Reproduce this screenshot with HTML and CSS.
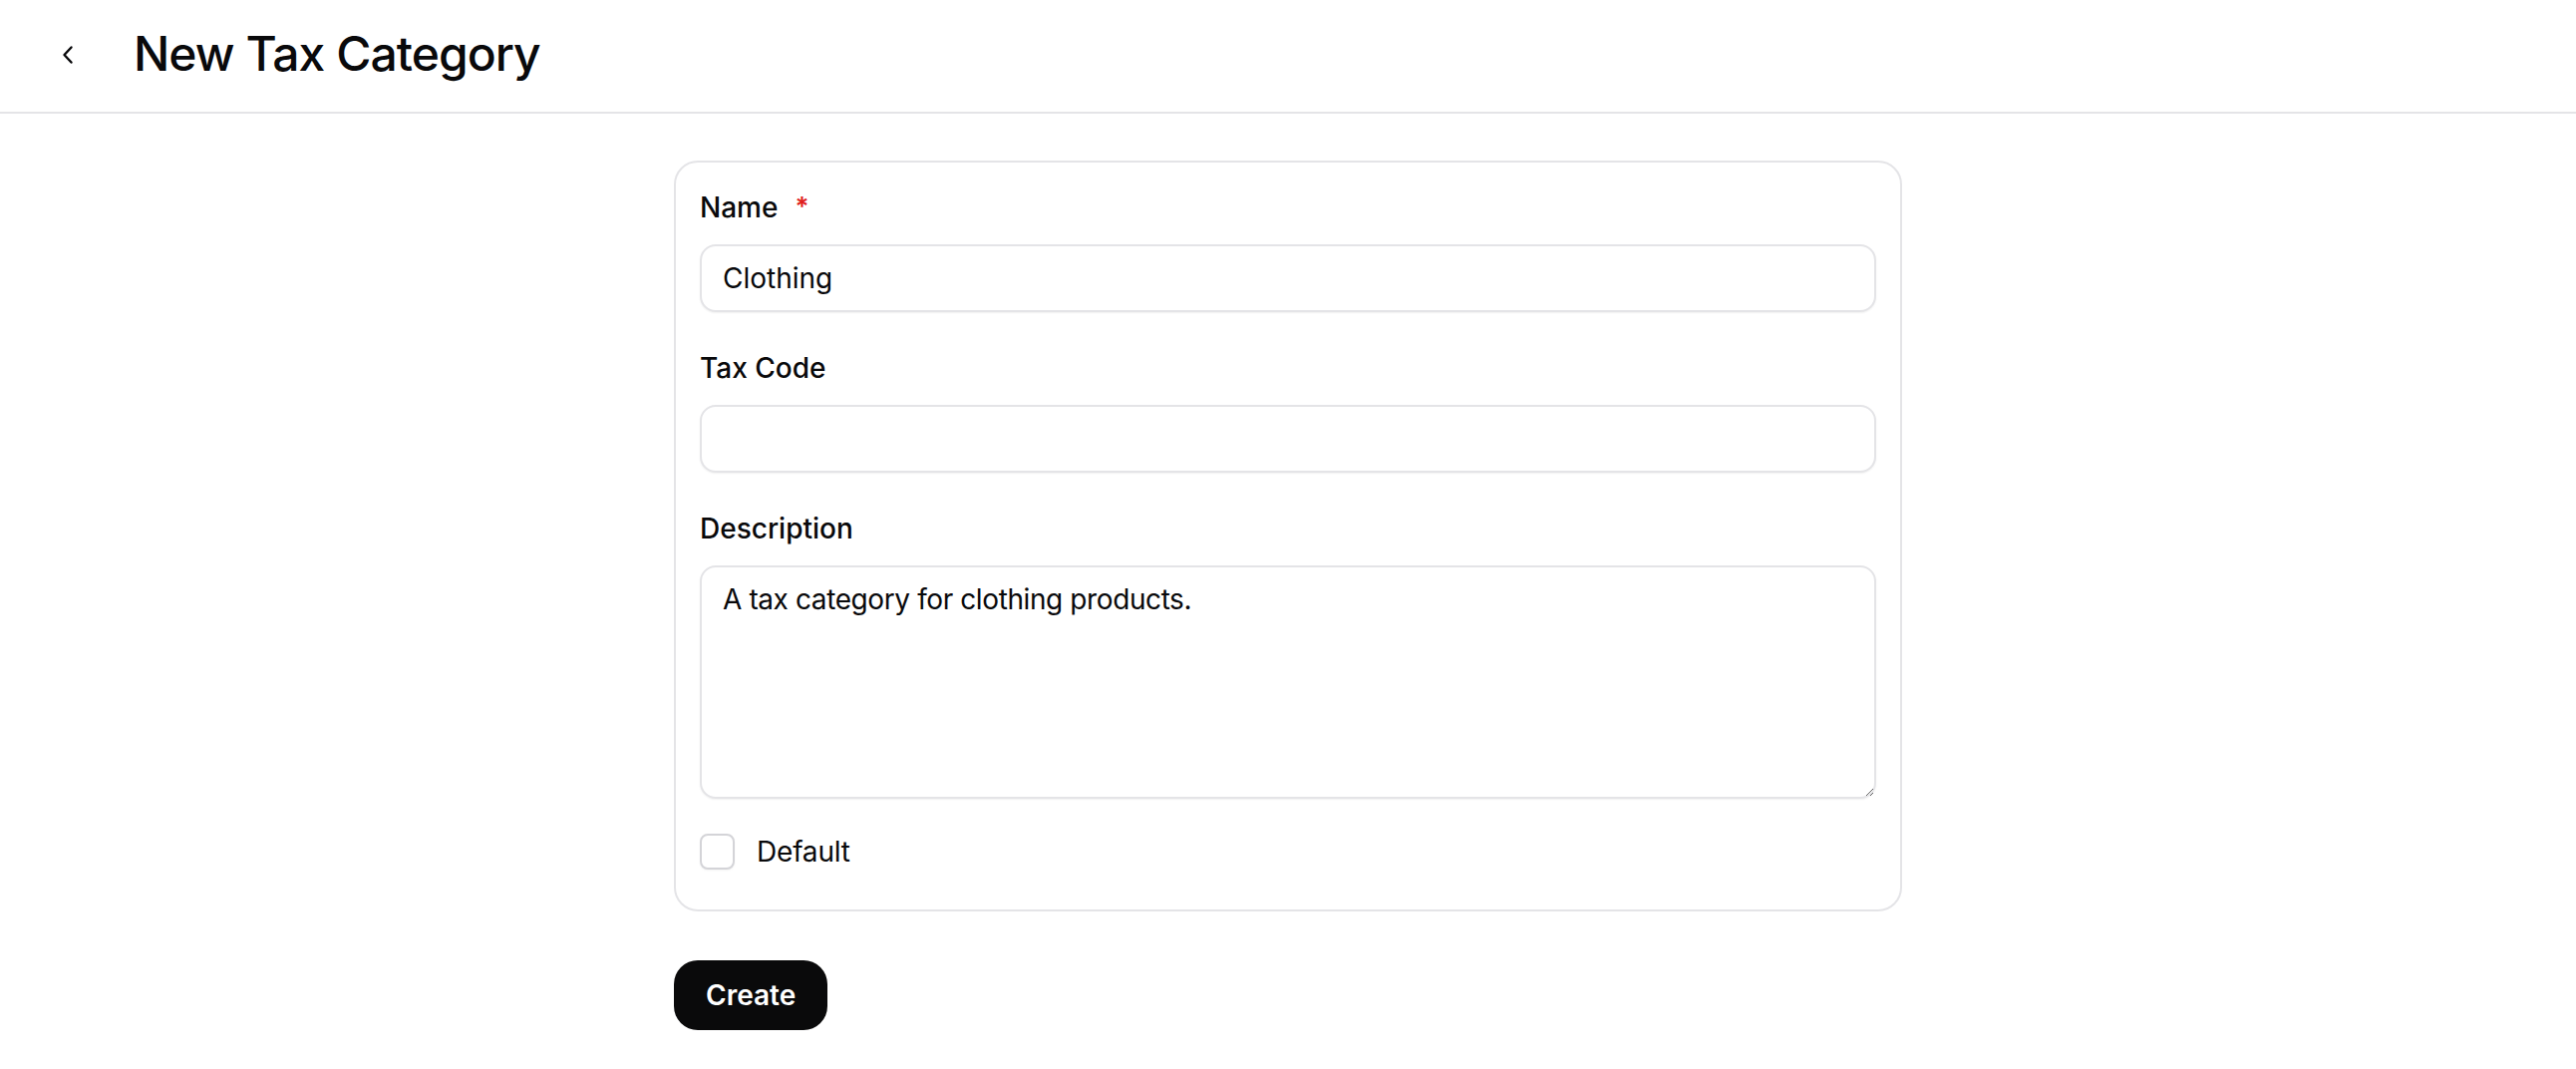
FILE: index.html
```html
<!DOCTYPE html>
<html lang="en">
<head>
<meta charset="utf-8">
<title>New Tax Category</title>
<link rel="stylesheet" href="styles.css">
</head>
<body>
<header class="topbar">
  <button class="back" type="button" aria-label="Back">
    <svg viewBox="0 0 30 30" width="30" height="30" fill="none" stroke="#09090b" stroke-width="2.4" stroke-linecap="round" stroke-linejoin="round"><path d="M18.5 7.5 L11.5 15 L18.5 22.5"/></svg>
  </button>
  <h1 class="title">New Tax Category</h1>
</header>
<main class="main">
  <form class="form">
    <section class="card">
      <div class="field">
        <label class="label" for="name">Name <span class="req">*</span></label>
        <input class="input" id="name" type="text" value="Clothing">
      </div>
      <div class="field">
        <label class="label" for="code">Tax Code</label>
        <input class="input" id="code" type="text" value="">
      </div>
      <div class="field">
        <label class="label" for="desc">Description</label>
        <textarea class="textarea" id="desc">A tax category for clothing products.</textarea>
      </div>
      <label class="check">
        <span class="box"></span>
        <span class="check-text">Default</span>
      </label>
    </section>
    <div class="actions">
      <button class="btn" type="button">Create</button>
    </div>
  </form>
</main>
</body>
</html>
```

FILE: styles.css
```css
* { box-sizing: border-box; }
html, body { margin: 0; padding: 0; background: #ffffff; }
body {
  font-family: "Inter", "Noto Sans", sans-serif;
  color: #09090b;
  -webkit-font-smoothing: antialiased;
}
.topbar {
  height: 114px;
  display: flex;
  align-items: center;
  border-bottom: 2px solid #e4e4e7;
  padding-left: 46px;
}
.back {
  width: 44px;
  height: 44px;
  padding: 0;
  border: 0;
  background: transparent;
  display: flex;
  align-items: center;
  justify-content: center;
  margin-right: 44px;
  margin-top: -2px;
}
.back svg { display: block; }
.title {
  margin: 0;
  font-size: 48px;
  line-height: 64px;
  font-weight: 500;
  letter-spacing: -0.02em;
  margin-top: -4px;
}
.main {
  padding-top: 47px;
}
.form {
  width: 1232px;
  margin: 0 auto;
}
.card {
  border: 2px solid #e4e4e7;
  border-radius: 24px;
  padding: 24px 24px 40px;
  display: flex;
  flex-direction: column;
  gap: 35px;
}
.field {
  display: flex;
  flex-direction: column;
  gap: 18px;
}
.label {
  font-size: 28px;
  line-height: 40px;
  font-weight: 500;
  display: flex;
  align-items: flex-start;
  padding-top: 1px;
  margin-bottom: -1px;
}
.req {
  color: #e01e1e;
  font-size: 26px;
  line-height: 26px;
  margin-left: 17px;
  margin-top: 6px;
  font-weight: 600;
}
.input, .textarea {
  width: 100%;
  border: 2px solid #e4e4e7;
  border-radius: 16px;
  background: #ffffff;
  font-family: "Inter", "Noto Sans", sans-serif;
  font-size: 28px;
  color: #09090b;
  box-shadow: 0 1px 2px rgba(0, 0, 0, 0.06);
  outline: none;
  margin: 0;
}
.input {
  height: 68px;
  padding: 0 21px;
  line-height: 40px;
}
.textarea {
  height: 234px;
  padding: 12px 21px;
  line-height: 40px;
  letter-spacing: -0.4px;
  resize: vertical;
  display: block;
}
.check {
  display: flex;
  align-items: center;
  gap: 22px;
  height: 36px;
}
.box {
  width: 35px;
  height: 36px;
  border: 2px solid #d4d4d8;
  border-radius: 8px;
  background: #ffffff;
  box-shadow: 0 1px 2px rgba(0, 0, 0, 0.05);
}
.check-text {
  font-size: 28px;
  line-height: 40px;
  font-weight: 400;
  letter-spacing: -0.2px;
}
.actions {
  padding-top: 49px;
}
.btn {
  height: 70px;
  padding: 0 32px;
  border: 0;
  border-radius: 24px;
  background: #0a0a0b;
  color: #ffffff;
  font-family: "Inter", "Noto Sans", sans-serif;
  font-size: 28px;
  font-weight: 600;
}
```
